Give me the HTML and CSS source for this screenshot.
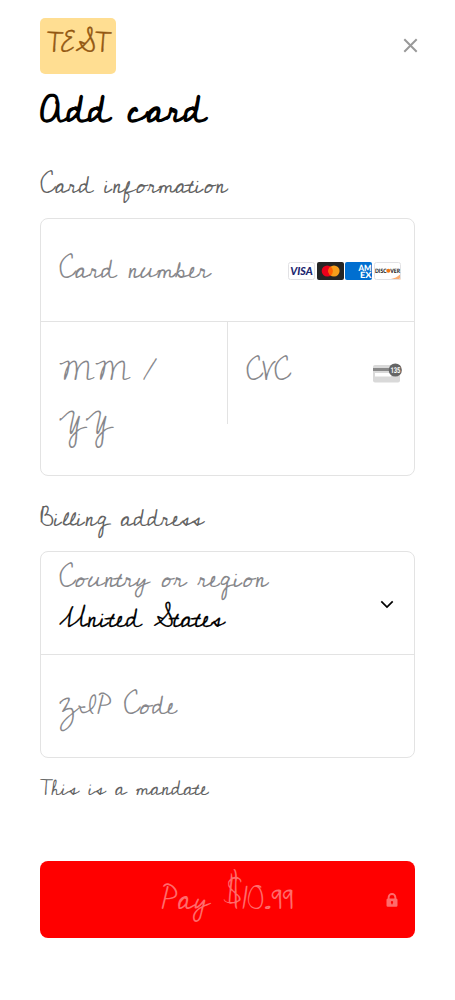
FILE: index.html
```html
<!DOCTYPE html>
<html lang="en">
<head>
<meta charset="utf-8">
<title>Add card</title>
<link rel="stylesheet" href="styles.css">
</head>
<body>
<main class="sheet">
  <header class="top">
    <span class="badge">TEST</span>
    <svg class="close" width="15" height="15" viewBox="0 0 15 15"><path d="M1.3 1.3 13.7 13.7M13.7 1.3 1.3 13.7" fill="none" stroke="#999" stroke-width="2"/></svg>
  </header>
  <h1 class="title">Add card</h1>
  <h2 class="label card-label">Card information</h2>
  <section class="box">
    <div class="row line">
      <span class="hint">Card number</span>
      <div class="brands">
        <svg width="27" height="18" viewBox="0 0 27 18"><rect x=".5" y=".5" width="26" height="17" rx="2" fill="#fff" stroke="#e2e2e5"/><text x="2.2" y="13" class="visa" textLength="22.5" lengthAdjust="spacingAndGlyphs">VISA</text></svg>
        <svg width="27" height="18" viewBox="0 0 27 18"><rect width="27" height="18" rx="2" fill="#252525"/><circle cx="10.3" cy="9" r="5.6" fill="#eb001b"/><circle cx="17" cy="9" r="5.6" fill="#f79e1b"/><path d="M13.65 4.5a5.6 5.6 0 0 1 0 9a5.6 5.6 0 0 1 0-9" fill="#ff5f00"/></svg>
        <svg width="27" height="18" viewBox="0 0 27 18"><rect width="27" height="18" rx="2" fill="#016fd0"/><text x="13.5" y="8.8" class="amex" textLength="13" lengthAdjust="spacingAndGlyphs">AM</text><text x="15" y="16" class="amex" textLength="11.5" lengthAdjust="spacingAndGlyphs">EX</text></svg>
        <svg width="27" height="18" viewBox="0 0 27 18"><path d="M15 17.5Q23 16 26.5 12V17.5Z" fill="#fbad72"/><rect x=".5" y=".5" width="26" height="17" rx="2" fill="none" stroke="#e2e2e5"/><text x="1" y="11" class="disc" textLength="11.5" lengthAdjust="spacingAndGlyphs">DISC</text><circle cx="14.3" cy="8.8" r="2" fill="#f27712"/><text x="16.3" y="11" class="disc" textLength="9.8" lengthAdjust="spacingAndGlyphs">VER</text></svg>
      </div>
    </div>
    <div class="split">
      <div class="cell expiry"><span class="hint">MM /</span><span class="hint">YY</span></div>
      <div class="cell cvc">
        <span class="hint">CVC</span>
        <svg class="cvc-icon" width="30" height="20" viewBox="0 0 30 20"><rect x="0" y="2" width="27" height="17.5" rx="2" fill="#d9d9d9"/><rect y="5" width="27" height="3" fill="#898989"/><rect x="2" y="10" width="16" height="3.5" fill="#fff"/><circle cx="22.3" cy="7" r="6.6" fill="#656565"/><text x="17.4" y="9.8" class="digits" textLength="10" lengthAdjust="spacingAndGlyphs">135</text></svg>
      </div>
    </div>
  </section>
  <h2 class="label bill-label">Billing address</h2>
  <section class="box">
    <div class="row line">
      <div class="country"><span class="hint">Country or region</span><span class="value">United States</span></div>
      <svg class="chevron" width="14" height="9" viewBox="0 0 14 9"><path d="M1.3 1.3 7 7 12.7 1.3" fill="none" stroke="#000" stroke-width="1.7"/></svg>
    </div>
    <div class="row"><span class="hint">ZIP Code</span></div>
  </section>
  <p class="mandate">This is a mandate</p>
  <button class="pay"><span class="pay-text">Pay $10.99</span>
    <svg class="lock" width="12" height="14" viewBox="0 0 12 14"><path fill="#ff6b6b" fill-rule="evenodd" d="M1.7 5.5V4.3a4.3 4.3 0 0 1 8.6 0v1.2A1.4 1.4 0 0 1 11.5 7v5.4a1.4 1.4 0 0 1-1.4 1.4H1.9A1.4 1.4 0 0 1 .5 12.4V7a1.4 1.4 0 0 1 1.2-1.5ZM3.6 5.5h4.8V4.3a2.4 2.4 0 0 0-4.8 0ZM6 8a1.1 1.1 0 0 0-.7 2v1.3h1.4V10A1.1 1.1 0 0 0 6 8Z"/></svg>
  </button>
</main>
</body>
</html>
```
FILE: styles.css
```css
* { box-sizing: border-box; }
body { margin: 0; background: #fff; font-family: "Cedarville Cursive", cursive; font-weight: 400; text-rendering: geometricPrecision; }
h1, h2, p { margin: 0; font-weight: 400; white-space: nowrap; }
.sheet { padding: 18px 40px 62px; }
.top { display: flex; justify-content: space-between; height: 56px; margin-right: -4px; }
.badge { width: 75.5px; height: 56px; padding-left: 7px; border-radius: 5px; background: #ffde92; color: #925711; line-height: 53px; font-size: 27px; -webkit-text-stroke: .4px #925711; }
.close { margin-top: 20px; margin-right: 1px; }
.title { height: 72px; line-height: 74px; font-size: 38.5px; font-weight: 700; color: #000; }
.label { font-size: 24.8px; color: #636363; }
.card-label { height: 72px; padding-top: 7px; line-height: 67px; }
.bill-label { height: 75px; padding-top: 11px; line-height: 65px; }
.box { border: 1px solid #e3e3e3; border-radius: 8px; }
.row { display: flex; align-items: center; justify-content: space-between; height: 102px; padding: 0 13px 0 18px; }
.line { height: 103px; border-bottom: 1px solid #e3e3e3; }
.hint { color: #87878b; font-size: 26.8px; line-height: 53px; white-space: nowrap; }
.row > .hint { padding-top: 2px; }
.value { color: #000; font-size: 27px; white-space: nowrap; -webkit-text-stroke: .2px #000; }
.brands { display: flex; gap: 1.7px; padding-top: 1px; }
.visa { font: italic 900 11px Lato, sans-serif; fill: #20266f; }
.amex { font: normal 900 8.5px Lato, sans-serif; fill: #fff; }
.disc { font: normal 900 6px Lato, sans-serif; fill: #222; }
.digits { font: normal 700 8px Roboto, sans-serif; fill: #fff; }
.split { display: grid; grid-template-columns: 186px 1fr; height: 153px; }
.cell { display: flex; padding: 25px 11px 0 18px; }
.expiry { flex-direction: column; align-items: flex-start; }
.cvc { height: 102px; justify-content: space-between; border-left: 1px solid #e3e3e3; }
.cvc-icon { margin-top: 16px; }
.country { display: flex; flex-direction: column; align-items: flex-start; padding-bottom: 7px; }
.country > span { line-height: 39px; }
.chevron { margin-right: 7px; margin-top: 3px; }
.mandate { height: 58px; line-height: 61px; font-size: 21.4px; color: #636363; }
.pay { display: grid; grid-template-columns: 1fr auto 1fr; align-items: center; width: 375px; height: 77px; margin-top: 45px; padding: 0 17px; border: 0; border-radius: 8px; background: #f00; color: #ff6b6b; font: inherit; font-size: 30.6px; white-space: nowrap; }
.pay-text { grid-column: 2; padding-top: 1px; }
.lock { justify-self: end; }
```
